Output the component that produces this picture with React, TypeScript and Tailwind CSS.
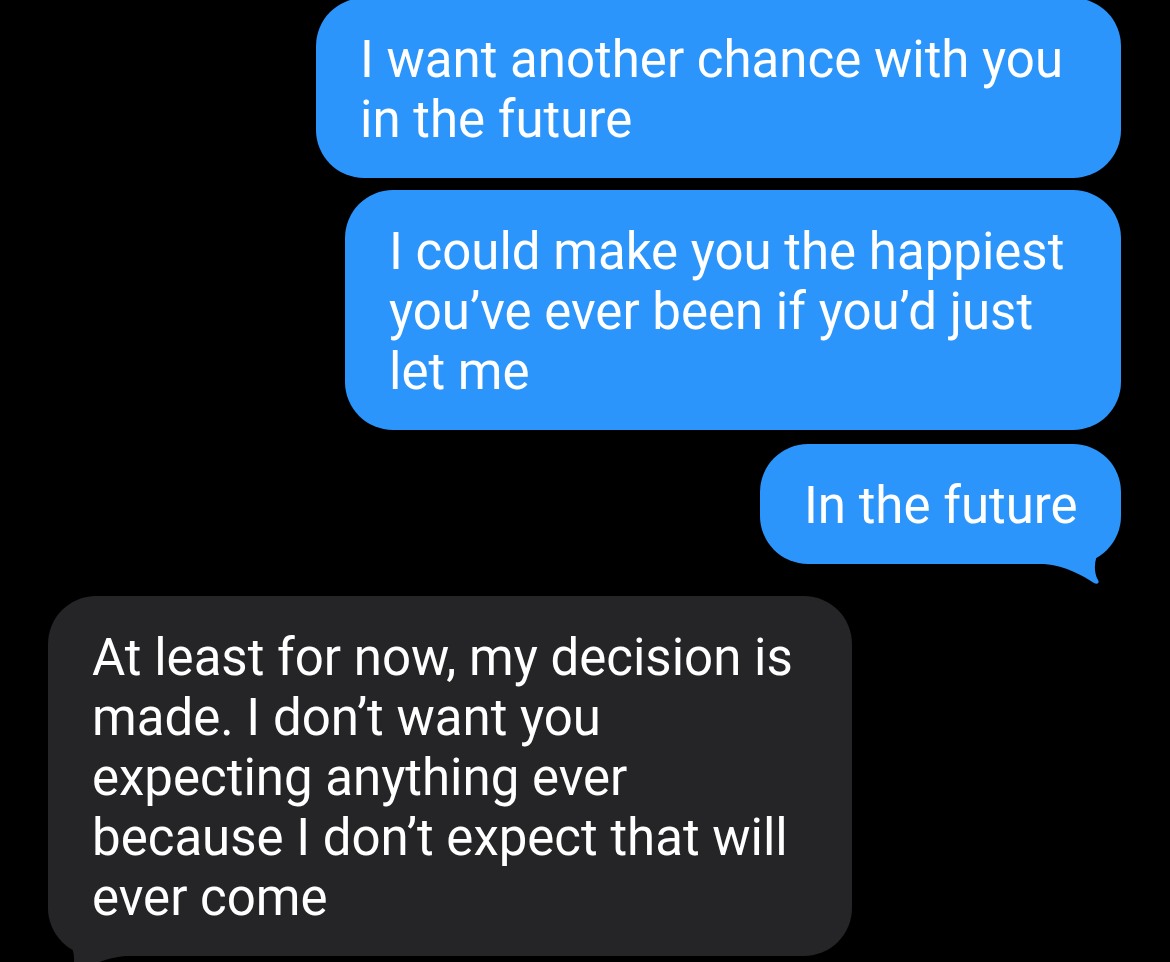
import React from 'react';

type Message = {
  id: number;
  fromMe: boolean;
  lines: string[];
  width: string;
  tail?: boolean;
};

const messages: Message[] = [
  { id: 1, fromMe: true, lines: ['I want another chance with you', 'in the future'], width: 'w-[805px]' },
  {
    id: 2,
    fromMe: true,
    lines: ['I could make you the happiest', 'you\u2019ve ever been if you\u2019d just', 'let me'],
    width: 'w-[776px]',
  },
  { id: 3, fromMe: true, lines: ['In the future'], width: 'w-[361px]', tail: true },
  {
    id: 4,
    fromMe: false,
    lines: [
      'At least for now, my decision is',
      'made. I don\u2019t want you',
      'expecting anything ever',
      'because I don\u2019t expect that will',
      'ever come',
    ],
    width: 'w-[804px]',
    tail: true,
  },
];

// iMessage-style tail, drawn for the right side; flipped for received bubbles
function Tail({ color, flip }: { color: string; flip?: boolean }) {
  return (
    <svg
      width="82"
      height="50"
      viewBox="0 0 82 50"
      className={`absolute bottom-[-20px] ${flip ? 'left-[0px] -scale-x-100' : 'right-[0px]'}`}
    >
      <path
        d="M 0 0 L 62 0 L 62 14 C 55 24, 54 37, 59 46 C 61 49, 58 51, 55 49 C 44 42, 28 32, 5 30 L 0 30 Z"
        fill={color}
      />
    </svg>
  );
}

function Bubble({ msg }: { msg: Message }) {
  const bg = msg.fromMe ? 'bg-[#2b95fb]' : 'bg-[#252528]';
  const fill = msg.fromMe ? '#2b95fb' : '#252528';
  return (
    <div className={`relative ${msg.width} ${bg} rounded-[48px] pl-[44px] pt-[32px] pb-[28px]`}>
      {msg.tail && <Tail color={fill} flip={!msg.fromMe} />}
      <p className="relative text-white text-[51px] leading-[60px] whitespace-nowrap font-['Roboto',sans-serif]">
        {msg.lines.map((line, i) => (
          <span key={i} className="block">
            {line}
          </span>
        ))}
      </p>
    </div>
  );
}

export default function App() {
  return (
    <div className="w-[1170px] h-[962px] bg-black overflow-hidden flex flex-col">
      <div className="flex justify-end pr-[49px] mt-[-2px]">
        <Bubble msg={messages[0]} />
      </div>
      <div className="flex justify-end pr-[49px] mt-[12px]">
        <Bubble msg={messages[1]} />
      </div>
      <div className="flex justify-end pr-[49px] mt-[14px]">
        <Bubble msg={messages[2]} />
      </div>
      <div className="flex justify-start pl-[48px] mt-[32px]">
        <Bubble msg={messages[3]} />
      </div>
    </div>
  );
}
